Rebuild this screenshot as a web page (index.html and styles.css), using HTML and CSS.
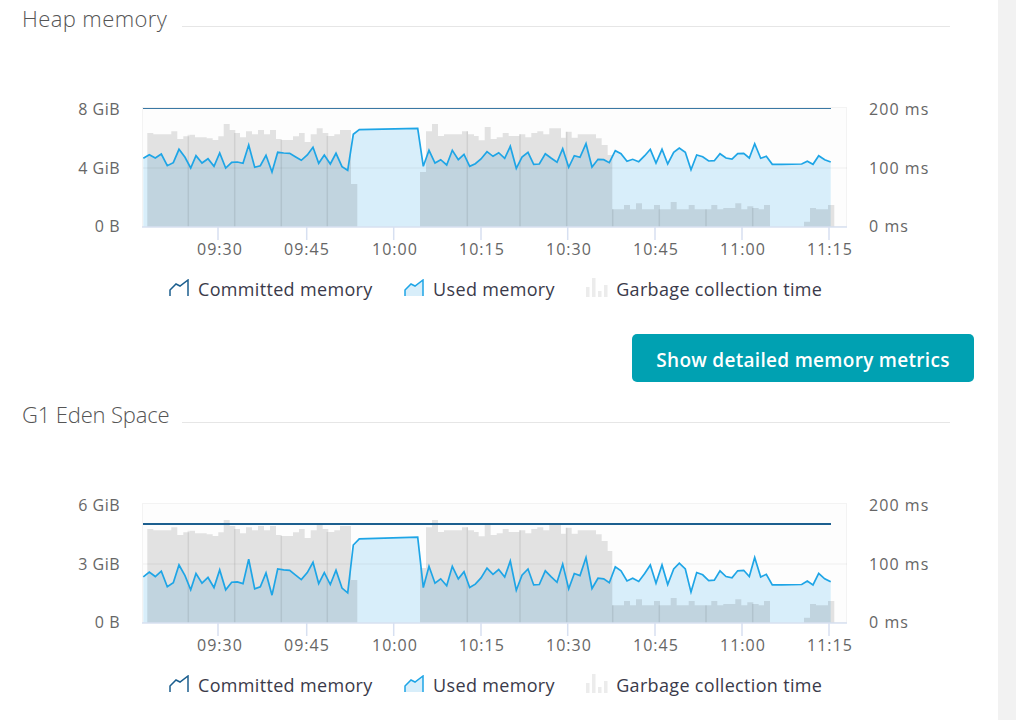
FILE: index.html
```html
<!DOCTYPE html>
<html lang="en">
<head>
<meta charset="utf-8">
<title>Memory</title>
<link rel="stylesheet" href="styles.css">
</head>
<body>
<div class="page">
  <main class="content">
    <section class="panel">
      <div class="panel-head"><h2 class="panel-title heap-title">Heap memory</h2><span class="panel-rule"></span></div>
      <svg class="chart" viewBox="0 95 960 170" aria-label="Heap memory chart">
        <defs>
          <clipPath id="plot-clip"><rect x="143" y="100" width="704" height="127"></rect></clipPath>
          <polygon id="used-area" class="area" points="143.3,158.3 149.3,154.7 155.3,158 161.3,154 167.3,165.7 173.3,162.7 179,149.3 185,157.3 190.7,168 196,155.7 202,163 208,158.7 214,166.3 219.7,153 225.7,168 231.7,162.3 237.3,162 243,163.3 248.7,145 254.7,167.3 260.3,165.7 266,155.3 272,172 277.7,152.3 283.7,153 289.7,153.3 295.3,156.7 301.3,160.3 307.3,155 313,147.3 318.7,163.3 324.3,155 330.3,164 336,153.3 342,166.7 347.7,170.3 353.3,134.3 359.3,129.7 417.7,128.3 423.3,166.3 429,150.3 435,163 440.7,159.7 446.7,165 452.3,150.3 458.3,159.7 464,154.3 469.7,166.3 475.3,163.7 481,159 487,151.7 493,156.3 498.7,152.7 504.7,158.3 510.3,146.3 516.3,168.3 522,157 528,152.3 533.7,164.3 539.3,164 545.3,153.7 551,158 557,162.3 562.7,148.7 568.7,167.3 574.3,155.7 580,157.3 586,143.7 592,167 598,159.3 603.7,159.7 609.3,162.7 615.3,150.7 621,153.7 627,161.3 632.7,159.3 638.7,161.7 644.7,155.7 650.3,149.3 656,163 662,149.3 667.7,164 673.7,152.3 679.3,148 685.3,152.3 691,169.7 696.7,155 702.7,156.7 708.7,161 714.3,160.7 720,153.7 726,158 732,159 737.7,153.7 743.7,153.3 749.3,158 754.7,143.7 760.7,158.3 766.3,156.3 772.3,164.3 781.7,164.3 801.7,164 807.3,161.3 813,164.3 818.7,155.7 824.7,159.7 830.7,162 830.7,300 143.3,300"></polygon>
          <polyline id="used-line" class="line" points="143.3,158.3 149.3,154.7 155.3,158 161.3,154 167.3,165.7 173.3,162.7 179,149.3 185,157.3 190.7,168 196,155.7 202,163 208,158.7 214,166.3 219.7,153 225.7,168 231.7,162.3 237.3,162 243,163.3 248.7,145 254.7,167.3 260.3,165.7 266,155.3 272,172 277.7,152.3 283.7,153 289.7,153.3 295.3,156.7 301.3,160.3 307.3,155 313,147.3 318.7,163.3 324.3,155 330.3,164 336,153.3 342,166.7 347.7,170.3 353.3,134.3 359.3,129.7 417.7,128.3 423.3,166.3 429,150.3 435,163 440.7,159.7 446.7,165 452.3,150.3 458.3,159.7 464,154.3 469.7,166.3 475.3,163.7 481,159 487,151.7 493,156.3 498.7,152.7 504.7,158.3 510.3,146.3 516.3,168.3 522,157 528,152.3 533.7,164.3 539.3,164 545.3,153.7 551,158 557,162.3 562.7,148.7 568.7,167.3 574.3,155.7 580,157.3 586,143.7 592,167 598,159.3 603.7,159.7 609.3,162.7 615.3,150.7 621,153.7 627,161.3 632.7,159.3 638.7,161.7 644.7,155.7 650.3,149.3 656,163 662,149.3 667.7,164 673.7,152.3 679.3,148 685.3,152.3 691,169.7 696.7,155 702.7,156.7 708.7,161 714.3,160.7 720,153.7 726,158 732,159 737.7,153.7 743.7,153.3 749.3,158 754.7,143.7 760.7,158.3 766.3,156.3 772.3,164.3 781.7,164.3 801.7,164 807.3,161.3 813,164.3 818.7,155.7 824.7,159.7 830.7,162"></polyline>
          <path id="gc-bars" class="bars" d="M147.3 227V133H153.3V134.3H171.3V131.3H177.3V139H183.3V136.3H189.3V134.7H195V137.3H206.7V138.3H212.7V140H218.3V136.3H223.7V124H229.7V130H235.3V133H240V137.3H246V131.3H252V134.3H258V130H264V134.3H270V130H276V139H281.7V140H293V136.3H299V133H304.7V142H310.7V134.3H316.7V128.3H322.7V133H328.3V136H334.3V134.3H340V130H351V184H357.3V227Z M420 227V172H426V131.3H432V124H438V136H444V134.3H462V131.3H468V134.3H474V136H478.7V140.3H484.7V127H490.7V139H496.7V137.3H502.7V133H508.7V136H519.3V134.3H525.3V137.3H531.3V133H537.3V131.3H543.3V134.3H549.3V128.3H561V137.7H565.7V131.7H571.7V137.7H577.7V134.3H596V138.3H601.7V145H607.7V155H612.3V209.3H624V205H630V209.3H636V203.3H642V209.3H654V205H660V209.3H670.7V202H676.7V209.3H688.7V205H694.7V209.3H711.3V205H717.3V209.3H723.3V208H735.3V203.3H741.3V209.3H747.3V206.3H753.3V208H758.7V209.3H764V205H770V227Z M804 227V221.7H810V208H816V209.3H828V205H834.3V227Z"></path>
          <path id="gc-seams" class="seams" d="M188.3 134.7V227M234.7 133V227M281.3 140V227M327.3 136V227M467.3 131.3V227M520 134.3V227M566.7 131.7V227M612.7 209.3V227M659.3 209.3V227M706 209.3V227M752.7 208V227"></path>
          <path id="x-ticks" class="axis" d="M218 227V240M306.7 227V240M393.7 227V240M481 227V240M567.7 227V240M655 227V240M742 227V240M829 227V240"></path>
        </defs>
        <rect class="plot-bg" x="142.5" y="107.5" width="704" height="119"></rect>
        <use href="#used-area" clip-path="url(#plot-clip)"></use>
        <use href="#gc-bars"></use>
        <use href="#gc-seams"></use>
        <line class="grid" x1="143" y1="168" x2="847" y2="168"></line>
        <line class="limit-thin" x1="143" y1="108.5" x2="831" y2="108.5"></line>
        <use href="#used-line"></use>
        <line class="axis" x1="142" y1="227" x2="847" y2="227"></line>
        <use href="#x-ticks"></use>
        <text class="tick end" x="120" y="115">8 GiB</text>
        <text class="tick end" x="120" y="174">4 GiB</text>
        <text class="tick end" x="120" y="232">0 B</text>
        <text class="tick wide" x="869" y="115">200 ms</text>
        <text class="tick wide" x="869" y="174">100 ms</text>
        <text class="tick wide" x="869" y="232">0 ms</text>
        <text class="tick wide mid" x="220" y="255">09:30</text>
        <text class="tick wide mid" x="307" y="255">09:45</text>
        <text class="tick wide mid" x="395" y="255">10:00</text>
        <text class="tick wide mid" x="482" y="255">10:15</text>
        <text class="tick wide mid" x="569" y="255">10:30</text>
        <text class="tick wide mid" x="656" y="255">10:45</text>
        <text class="tick wide mid" x="743" y="255">11:00</text>
        <text class="tick wide mid" x="830" y="255">11:15</text>
      </svg>
      <ul class="legend">
        <li class="legend-item"><svg class="legend-icon" viewBox="0 0 20 18"><path class="icon-committed" d="M1 17V11L7 5L11 7L19 1V17"></path></svg>Committed memory</li>
        <li class="legend-item"><svg class="legend-icon" viewBox="0 0 20 18"><path class="icon-used" d="M1 17V11L7 5L11 7L19 1V17"></path></svg>Used memory</li>
        <li class="legend-item"><svg class="legend-icon gc-icon" viewBox="0 0 22 20"><path class="icon-gc" d="M0 20V10H3.5V20ZM6 20V1H9.5V20ZM12 20V14H15.5V20ZM18 20V8H21.5V20Z"></path></svg>Garbage collection time</li>
      </ul>
    </section>
    <div class="actions"><button class="primary" type="button">Show detailed memory metrics</button></div>
    <section class="panel">
      <div class="panel-head"><h2 class="panel-title eden-title">G1 Eden Space</h2><span class="panel-rule"></span></div>
      <svg class="chart" viewBox="0 95 960 170" aria-label="G1 Eden Space chart">
        <rect class="plot-bg" x="142.5" y="107.5" width="704" height="119"></rect>
        <g clip-path="url(#plot-clip)">
          <g transform="matrix(1 0 0 1.33 0 -29.6)"><use href="#used-area"></use></g>
        </g>
        <use href="#gc-bars"></use>
        <use href="#gc-seams"></use>
        <line class="grid" x1="143" y1="168" x2="847" y2="168"></line>
        <line class="limit-thick" x1="143" y1="128" x2="831" y2="128"></line>
        <g transform="matrix(1 0 0 1.33 0 -29.6)"><use href="#used-line"></use></g>
        <line class="axis" x1="142" y1="227" x2="847" y2="227"></line>
        <use href="#x-ticks"></use>
        <text class="tick end" x="120" y="115">6 GiB</text>
        <text class="tick end" x="120" y="174">3 GiB</text>
        <text class="tick end" x="120" y="232">0 B</text>
        <text class="tick wide" x="869" y="115">200 ms</text>
        <text class="tick wide" x="869" y="174">100 ms</text>
        <text class="tick wide" x="869" y="232">0 ms</text>
        <text class="tick wide mid" x="220" y="255">09:30</text>
        <text class="tick wide mid" x="307" y="255">09:45</text>
        <text class="tick wide mid" x="395" y="255">10:00</text>
        <text class="tick wide mid" x="482" y="255">10:15</text>
        <text class="tick wide mid" x="569" y="255">10:30</text>
        <text class="tick wide mid" x="656" y="255">10:45</text>
        <text class="tick wide mid" x="743" y="255">11:00</text>
        <text class="tick wide mid" x="830" y="255">11:15</text>
      </svg>
      <ul class="legend">
        <li class="legend-item"><svg class="legend-icon" viewBox="0 0 20 18"><path class="icon-committed" d="M1 17V11L7 5L11 7L19 1V17"></path></svg>Committed memory</li>
        <li class="legend-item"><svg class="legend-icon" viewBox="0 0 20 18"><path class="icon-used" d="M1 17V11L7 5L11 7L19 1V17"></path></svg>Used memory</li>
        <li class="legend-item"><svg class="legend-icon gc-icon" viewBox="0 0 22 20"><path class="icon-gc" d="M0 20V10H3.5V20ZM6 20V1H9.5V20ZM12 20V14H15.5V20ZM18 20V8H21.5V20Z"></path></svg>Garbage collection time</li>
      </ul>
    </section>
  </main>
  <aside class="side"></aside>
</div>
</body>
</html>
```
FILE: styles.css
```css
* { box-sizing: border-box; }
html, body { margin: 0; padding: 0; background: #fff; }
body { font-family: "Open Sans", "Noto Sans", sans-serif; color: #3a3a4a; overflow: hidden; }
.page { display: flex; width: 1016px; height: 720px; overflow: hidden; }
.content { width: 998px; padding-top: 8px; }
.side { width: 18px; background: #f2f2f2; }
.panel-head { display: flex; align-items: flex-end; height: 24px; padding: 0 48px 0 22px; }
.panel-title { width: 160px; margin: 0 0 2px; font-size: 22px; font-weight: 300; line-height: 24px; color: #555; white-space: nowrap; }
.heap-title { letter-spacing: .4px; }
.eden-title { letter-spacing: -.15px; }
.panel-rule { flex: 1; height: 1px; margin-bottom: 5px; background: #e6e6e6; }
.chart { display: block; width: 960px; height: 170px; margin-top: 63px; }
.plot-bg { fill: #fdfdfd; stroke: #f3f3f3; stroke-width: 1; }
.area { fill: #d8eefa; vector-effect: non-scaling-stroke; }
.bars { fill: rgba(0, 0, 0, .105); }
.seams { fill: none; stroke: rgba(0, 0, 0, .08); stroke-width: 1.5; }
.grid { stroke: rgba(0, 0, 0, .06); stroke-width: 1; }
.limit-thin { stroke: #3a78a4; stroke-width: 1; }
.limit-thick { stroke: #1c5f8f; stroke-width: 2; }
.line { fill: none; stroke: #1ea5e6; stroke-width: 1.7; vector-effect: non-scaling-stroke; stroke-linejoin: miter; }
.axis { fill: none; stroke: #d7e0f1; stroke-width: 1.5; }
.tick { font-size: 16px; fill: #666; letter-spacing: .5px; }
.wide { letter-spacing: 1.05px; }
.end { text-anchor: end; }
.mid { text-anchor: middle; }
.legend { display: flex; gap: 31px; height: 22px; margin: 13px 0 0; padding: 0 0 0 168.5px; list-style: none; }
.legend-item { display: flex; align-items: center; gap: 9.5px; font-size: 18px; line-height: 22px; letter-spacing: .33px; white-space: nowrap; }
.legend-icon { width: 20px; height: 18px; margin-top: -3px; }
.gc-icon { width: 22px; height: 20px; margin: -4px -1.2px 0 0; }
.icon-committed { fill: none; stroke: #1c5f8f; stroke-width: 1.5; }
.icon-used { fill: #d8eefa; stroke: #1ea5e6; stroke-width: 1.5; }
.icon-gc { fill: #ececec; }
.actions { display: flex; justify-content: flex-end; padding: 34px 24px 22px 0; }
.primary { width: 342px; height: 48px; padding: 4px 0 0; border: 0; border-radius: 5px; background: #00a1b2; color: #fff; font: 600 19px "Open Sans", sans-serif; letter-spacing: .3px; }
```
